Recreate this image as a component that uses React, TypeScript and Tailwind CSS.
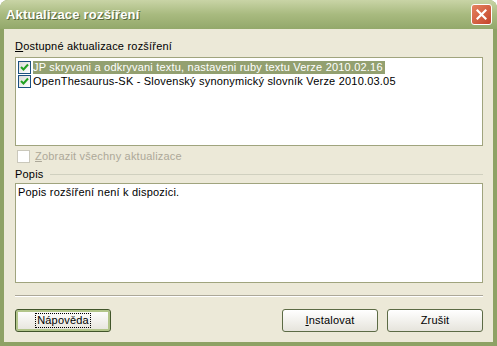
import React from 'react';

const font = { fontFamily: '"Liberation Sans", Arial, sans-serif' };

const XpCheck = ({ checked, disabled }: { checked?: boolean; disabled?: boolean }) => (
  <span
    className={
      disabled
        ? 'inline-flex w-[13px] h-[13px] border border-[#cac8bb] bg-white shrink-0'
        : 'inline-flex w-[13px] h-[13px] border border-[#1c5180] bg-gradient-to-br from-[#dcdcd7] to-white shrink-0 items-center justify-center'
    }
  >
    {checked && (
      <svg width="9" height="9" viewBox="0 0 9 9">
        <path d="M1 4 L3.5 6.5 L8 1.5" fill="none" stroke="#21a121" strokeWidth="2" />
      </svg>
    )}
  </span>
);

const XpButton = ({ children, focused }: { children: React.ReactNode; focused?: boolean }) => (
  <button
    className={
      focused
        ? 'h-[23px] w-[96px] rounded-[3px] border border-[#41552a] bg-gradient-to-b from-white to-[#e6e4dc] text-[11px] tracking-[0.2px] text-black shadow-[inset_0_0_0_2px_#b2c58a] flex items-center justify-center'
        : 'h-[23px] w-[96px] rounded-[3px] border border-[#5c6b45] bg-gradient-to-b from-white to-[#e6e4dc] text-[11px] tracking-[0.2px] text-black flex items-center justify-center'
    }
    style={font}
  >
    {focused ? <span className="outline outline-1 outline-dotted outline-black px-[1px] leading-[13px]">{children}</span> : children}
  </button>
);

export default function App() {
  return (
    <div className="w-[497px] h-[346px] bg-[#ffffff]" style={font}>
      <div className="w-[497px] h-[346px] flex flex-col bg-[#8ea265] rounded-t-[8px] overflow-hidden">
        {/* Title bar */}
        <div className="h-[29px] flex items-center justify-between pl-[6px] pr-[5px] bg-gradient-to-b from-[#c9d4a6] via-[#a8ba7f] to-[#93a86b]">
          <span className="text-white text-[13px] font-bold tracking-[0.2px] [text-shadow:1px_1px_0_#55653a]">
            Aktualizace rozšíření
          </span>
          <span className="w-[21px] h-[21px] rounded-[3px] border border-white bg-gradient-to-br from-[#e5825f] to-[#c4432a] flex items-center justify-center">
            <svg width="11" height="11" viewBox="0 0 11 11">
              <path d="M1.5 1.5 L9.5 9.5 M9.5 1.5 L1.5 9.5" stroke="white" strokeWidth="2.2" strokeLinecap="square" />
            </svg>
          </span>
        </div>

        {/* Client area */}
        <div className="flex-1 mx-[4px] mb-[4px] bg-[#ece9d8] flex flex-col pl-[11px] pr-[10px] text-[11px] tracking-[0.2px] text-black">
          <div className="mt-[11px] h-[13px] leading-[13px]">
            <span className="underline underline-offset-1">D</span>ostupné aktualizace rozšíření
          </div>
          <div className="mt-[4px] h-[89px] border border-[#a0a47e] bg-white pt-[2px] pl-[2px]">
            <div className="flex items-center h-[14px] gap-[2px]">
              <XpCheck checked />
              <span className="bg-[#93a070] text-white leading-[13px] pr-[2px]">JP skryvani a odkryvani textu, nastaveni ruby textu Verze 2010.02.16</span>
            </div>
            <div className="flex items-center h-[14px] gap-[2px]">
              <XpCheck checked />
              <span className="leading-[13px]">OpenThesaurus-SK - Slovenský synonymický slovník Verze 2010.03.05</span>
            </div>
          </div>
          <div className="mt-[3px] h-[14px] flex items-center gap-[5px] text-[#aca899] pl-[2px]">
            <XpCheck disabled />
            <span>
              <span className="underline underline-offset-1">Z</span>obrazit všechny aktualizace
            </span>
          </div>
          <div className="mt-[4px] h-[14px] flex items-center gap-[6px]">
            <span>Popis</span>
            <div className="flex-1 border-t border-[#d0d0bf]" />
          </div>
          <div className="mt-[2px] h-[100px] border border-[#a0a47e] bg-white px-[2px] pt-[2px] leading-[13px]">
            Popis rozšíření není k dispozici.
          </div>
          <div className="mt-[12px] border-t border-[#aca899] border-b border-b-white" />
          <div className="mt-[12px] flex items-center">
            <XpButton focused>Nápověda</XpButton>
            <div className="flex-1" />
            <XpButton>
              <span>
                <span className="underline underline-offset-1">I</span>nstalovat
              </span>
            </XpButton>
            <div className="w-[9px]" />
            <XpButton>Zrušit</XpButton>
          </div>
        </div>
      </div>
    </div>
  );
}
